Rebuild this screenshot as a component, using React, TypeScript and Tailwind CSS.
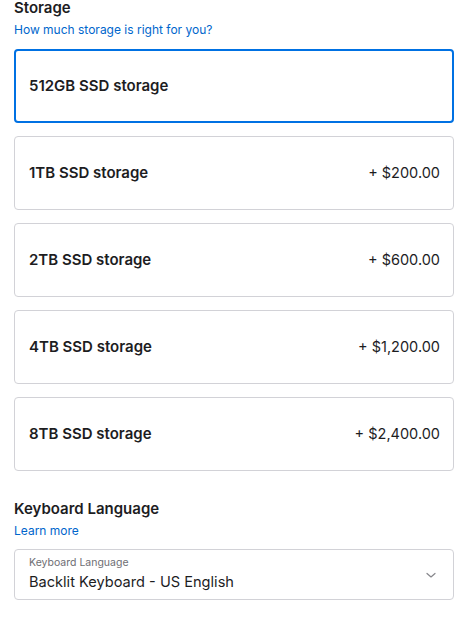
import React from "react";

const options = [
  { name: "512GB SSD storage", price: "", selected: true },
  { name: "1TB SSD storage", price: "+ $200.00" },
  { name: "2TB SSD storage", price: "+ $600.00" },
  { name: "4TB SSD storage", price: "+ $1,200.00" },
  { name: "8TB SSD storage", price: "+ $2,400.00" },
];

export default function App() {
  return (
    <div
      className="w-[476px] h-[628px] bg-white px-[14px] text-[#1d1d1f] overflow-hidden"
      style={{ fontFamily: "Inter, 'Liberation Sans', Arial, sans-serif" }}
    >
      <h2 className="text-[15px] font-semibold leading-[16px]">Storage</h2>
      <a className="block text-[12px] leading-[16px] text-[#0066cc] mt-[6px]">How much storage is right for you?</a>
      <div className="flex flex-col gap-[13px] mt-[11px] w-[440px]">
        {options.map((o) => (
          <div
            key={o.name}
            className={
              "h-[74px] rounded-[4px] flex items-center justify-between " +
              (o.selected ? "border-2 border-[#0071e3] pl-[13px] pr-[12px]" : "border border-[#d2d2d7] pl-[14px] pr-[13px]")
            }
          >
            <span className="text-[15px] font-semibold">{o.name}</span>
            {o.price && <span className="text-[14.5px]">{o.price}</span>}
          </div>
        ))}
      </div>
      <h2 className="text-[15px] font-semibold leading-[18px] mt-[29px]">Keyboard Language</h2>
      <a className="block text-[12px] leading-[16px] text-[#0066cc] mt-[5px]">Learn more</a>
      <div className="mt-[10px] w-[440px] h-[51px] rounded-[4px] border border-[#d2d2d7] flex items-center justify-between pl-[14px] pr-[14px]">
        <div className="flex flex-col">
          <span className="text-[10.5px] leading-[12px] text-[#6e6e73]">Keyboard Language</span>
          <span className="text-[14.6px] leading-[20px] mt-[3px]">Backlit Keyboard - US English</span>
        </div>
        <svg width="12" height="12" viewBox="0 0 12 12" fill="none" className="mr-[2px]">
          <path d="M2 4.5 L6 8 L10 4.5" stroke="#86868b" strokeWidth="1.2" strokeLinecap="round" strokeLinejoin="round" />
        </svg>
      </div>
    </div>
  );
}
